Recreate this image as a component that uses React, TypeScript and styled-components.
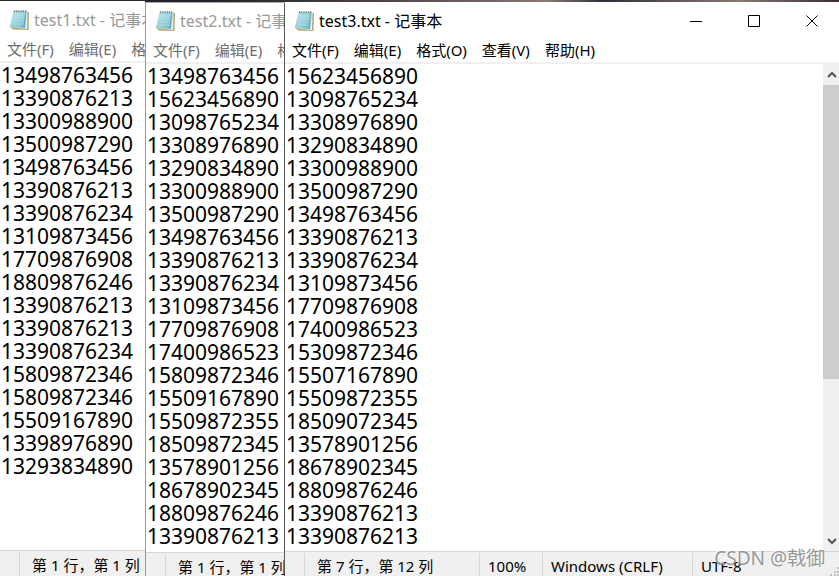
import React from "react";
import styled, { createGlobalStyle } from "styled-components";

const GlobalStyle = createGlobalStyle`
  * { box-sizing: border-box; }
  body { margin: 0; background: #fff; }
  button { font: inherit; color: inherit; border: 0; padding: 0; background: none; }
`;

const uiFont = `"Noto Sans", "Noto Sans CJK SC", sans-serif`;

const Desktop = styled.main`
  position: relative;
  display: grid;
  grid-template-columns: 145px 139px minmax(0, 1fr);
  height: 100vh;
  overflow: hidden;
  background: linear-gradient(90deg, #25222b 0, #25222b 25%, #4c4146 45%, #8c7775 65%, #30303a 72%, #8b7773 88%, #382e32 100%);
  font-family: ${uiFont};
  font-size: 15px;
  color: #000;
`;

const Window = styled.section<{ $edge: string; $cap: string; $top: number }>`
  display: flex;
  flex-direction: column;
  min-width: 0;
  min-height: 0;
  overflow: hidden;
  margin-top: ${(p) => p.$top}px;
  background: #fff;
  border-left: ${(p) => (p.$edge === "none" ? "0" : `1px solid ${p.$edge}`)};
  border-top: 1px solid ${(p) => p.$cap};
`;

const TitleBar = styled.header<{ $active: boolean }>`
  display: flex;
  flex: none;
  align-items: center;
  height: 35px;
  padding-left: 9px;
  color: ${(p) => (p.$active ? "#000" : "#999")};
  white-space: nowrap;
`;

const Title = styled.h1`
  flex: 1 0 auto;
  margin: 0 0 0 4px;
  font-size: 16px;
  line-height: 20px;
  font-weight: 400;
`;

const CaptionButtons = styled.div`
  display: flex;
  height: 100%;
  margin-right: -2px;
`;

const CaptionButton = styled.button`
  display: grid;
  place-items: center;
  width: 58px;
`;

const MenuBar = styled.nav<{ $active: boolean }>`
  display: flex;
  flex: none;
  gap: 15px;
  height: 26px;
  padding-left: 7px;
  border-bottom: 2px solid #f0f0f0;
  color: ${(p) => (p.$active ? "#000" : "#6d6d6d")};
`;

const MenuButton = styled.button`
  flex: none;
  line-height: 24px;
  white-space: nowrap;
`;

const Body = styled.div`
  display: flex;
  flex: 1;
  min-height: 0;
`;

const Editor = styled.textarea`
  flex: 1;
  min-width: 0;
  margin: 0;
  padding: 1px 0 0 1px;
  border: 0;
  outline: 0;
  resize: none;
  overflow: hidden;
  white-space: pre;
  background: #fff;
  color: #000;
  font-family: ${uiFont};
  font-size: 21px;
  line-height: 23px;
`;

const ScrollBar = styled.div`
  display: flex;
  flex: none;
  flex-direction: column;
  width: 16px;
  background: #f0f0f0;
`;

const ScrollTrack = styled.div`
  flex: 1;
`;

const ScrollThumb = styled.div`
  height: 66%;
  background: #cdcdcd;
`;

const ScrollButton = styled.button`
  display: grid;
  place-items: center end;
  flex: none;
  height: 21px;
  padding-right: 2px;
`;

const StatusBar = styled.footer<{ $height: number }>`
  display: flex;
  flex: none;
  justify-content: flex-end;
  height: ${(p) => p.$height}px;
  border-top: 1px solid #d7d7d7;
  background: #f0f0f0;
`;

const StatusCell = styled.div<{ $width: number; $pad: number }>`
  flex: none;
  width: ${(p) => p.$width}px;
  margin-top: 1px;
  padding-left: ${(p) => p.$pad}px;
  border-left: 1px solid #d7d7d7;
  line-height: 26px;
  white-space: pre;
`;

const SizeGrip = styled.svg`
  position: absolute;
  right: 0;
  bottom: 0;
`;

const Watermark = styled.div`
  position: absolute;
  right: 14px;
  bottom: 4px;
  font-size: 19px;
  line-height: 28px;
  color: rgba(120, 120, 120, 0.75);
  text-shadow: -1px -1px 0 rgba(255, 255, 255, 0.8);
  pointer-events: none;
`;

const IconSvg = styled.svg`
  flex: none;
`;

const NotepadIcon = () => (
  <IconSvg width="21" height="22" viewBox="0 0 21 22" aria-hidden="true">
    <defs>
      <linearGradient id="page" x1="0" y1="0" x2="1" y2="1">
        <stop offset="0" stopColor="#c4e9ef" />
        <stop offset="0.5" stopColor="#9bd4de" />
        <stop offset="1" stopColor="#62afbf" />
      </linearGradient>
    </defs>
    <path d="M5 2.5 20 3 19.5 21 4 20.5 1 18z" fill="#b9a573" />
    <path d="M5 2 18.5 2.5 18 20 1 18z" fill="#e9f0ec" />
    <path d="M4.5 2H18L16 19 .8 18z" fill="url(#page)" />
    <path d="M6 6h10M5.5 9h10M5 12h10M4.5 15h10" stroke="#b9e1e8" strokeWidth=".7" />
    <path d="M16.5 4 15 19" stroke="#519eb0" strokeWidth=".7" />
    <path d="M5 2.3h13" stroke="#69868c" strokeWidth="2" strokeDasharray="1.2 1" />
  </IconSvg>
);

const Chevron = ({ up = false }: { up?: boolean }) => (
  <svg width="10" height="8" viewBox="0 0 10 8" aria-hidden="true">
    <path d={up ? "M1 6 5 2 9 6" : "M1 2 5 6 9 2"} fill="none" stroke="#555" strokeWidth="2" />
  </svg>
);

const captions = [
  { label: "最小化", d: "M0 6.5H12" },
  { label: "最大化", d: "M.5.5H11.5V11.5H.5Z" },
  { label: "关闭", d: "M.5.5 11.5 11.5M11.5.5.5 11.5" },
];

const menus = ["文件(F)", "编辑(E)", "格式(O)", "查看(V)", "帮助(H)"];

interface Doc {
  name: string;
  active: boolean;
  edge: string;
  cap: string;
  top: number;
  menuCount: number;
  statusHeight: number;
  status: { text: string; width: number; pad: number }[];
  lines: string[];
}

const docs: Doc[] = [
  {
    name: "test1.txt", active: false, edge: "none", cap: "#fff", top: 1, menuCount: 3,
    statusHeight: 26, status: [{ text: "第 1 行，第 1 列", width: 126, pad: 12 }],
    lines: ["13498763456", "13390876213", "13300988900", "13500987290", "13498763456", "13390876213", "13390876234", "13109873456", "17709876908", "18809876246", "13390876213", "13390876213", "13390876234", "15809872346", "15809872346", "15509167890", "13398976890", "13293834890"],
  },
  {
    name: "test2.txt", active: false, edge: "#999", cap: "#aaa", top: 2, menuCount: 3,
    statusHeight: 24, status: [{ text: "第 1 行，第 1 列", width: 119, pad: 12 }],
    lines: ["13498763456", "15623456890", "13098765234", "13308976890", "13290834890", "13300988900", "13500987290", "13498763456", "13390876213", "13390876234", "13109873456", "17709876908", "17400986523", "15809872346", "15509167890", "15509872355", "18509872345", "13578901256", "18678902345", "18809876246", "13390876213"],
  },
  {
    name: "test3.txt", active: true, edge: "#555", cap: "#fff", top: 2, menuCount: 5,
    statusHeight: 25,
    status: [
      { text: "第 7 行，第 12 列", width: 175, pad: 12 },
      { text: "100%", width: 63, pad: 8 },
      { text: "Windows (CRLF)", width: 150, pad: 8 },
      { text: "UTF-8", width: 147, pad: 8 },
    ],
    lines: ["15623456890", "13098765234", "13308976890", "13290834890", "13300988900", "13500987290", "13498763456", "13390876213", "13390876234", "13109873456", "17709876908", "17400986523", "15309872346", "15507167890", "15509872355", "18509072345", "13578901256", "18678902345", "18809876246", "13390876213", "13390876213"],
  },
];

const Notepad = ({ doc }: { doc: Doc }) => (
  <Window $edge={doc.edge} $cap={doc.cap} $top={doc.top}>
    <TitleBar $active={doc.active}>
      <NotepadIcon />
      <Title>{doc.name} - 记事本</Title>
      {doc.active && (
        <CaptionButtons>
          {captions.map((c) => (
            <CaptionButton key={c.label} aria-label={c.label}>
              <svg width="12" height="12" viewBox="0 0 12 12" aria-hidden="true">
                <path d={c.d} fill="none" stroke="#000" />
              </svg>
            </CaptionButton>
          ))}
        </CaptionButtons>
      )}
    </TitleBar>
    <MenuBar $active={doc.active}>
      {menus.slice(0, doc.menuCount).map((m) => (
        <MenuButton key={m}>{m}</MenuButton>
      ))}
    </MenuBar>
    <Body>
      <Editor aria-label={doc.name} wrap="off" spellCheck={false} defaultValue={doc.lines.join("\n")} />
      {doc.active && (
        <ScrollBar>
          <ScrollButton aria-label="向上滚动"><Chevron up /></ScrollButton>
          <ScrollTrack><ScrollThumb /></ScrollTrack>
          <ScrollButton aria-label="向下滚动"><Chevron /></ScrollButton>
        </ScrollBar>
      )}
    </Body>
    <StatusBar $height={doc.statusHeight}>
      {doc.status.map((s) => (
        <StatusCell key={s.text} $width={s.width} $pad={s.pad}>{s.text}</StatusCell>
      ))}
    </StatusBar>
  </Window>
);

export default function App() {
  return (
    <Desktop>
      <GlobalStyle />
      {docs.map((doc) => (
        <Notepad key={doc.name} doc={doc} />
      ))}
      <SizeGrip width="9" height="9" viewBox="0 0 9 9" aria-hidden="true">
        <path d="M7 0h2v2H7zM4 4h2v2H4zM7 4h2v2H7zM0 7h2v2H0zM4 7h2v2H4zM7 7h2v2H7z" fill="#bfbfbf" />
      </SizeGrip>
      <Watermark>CSDN @戟御</Watermark>
    </Desktop>
  );
}
